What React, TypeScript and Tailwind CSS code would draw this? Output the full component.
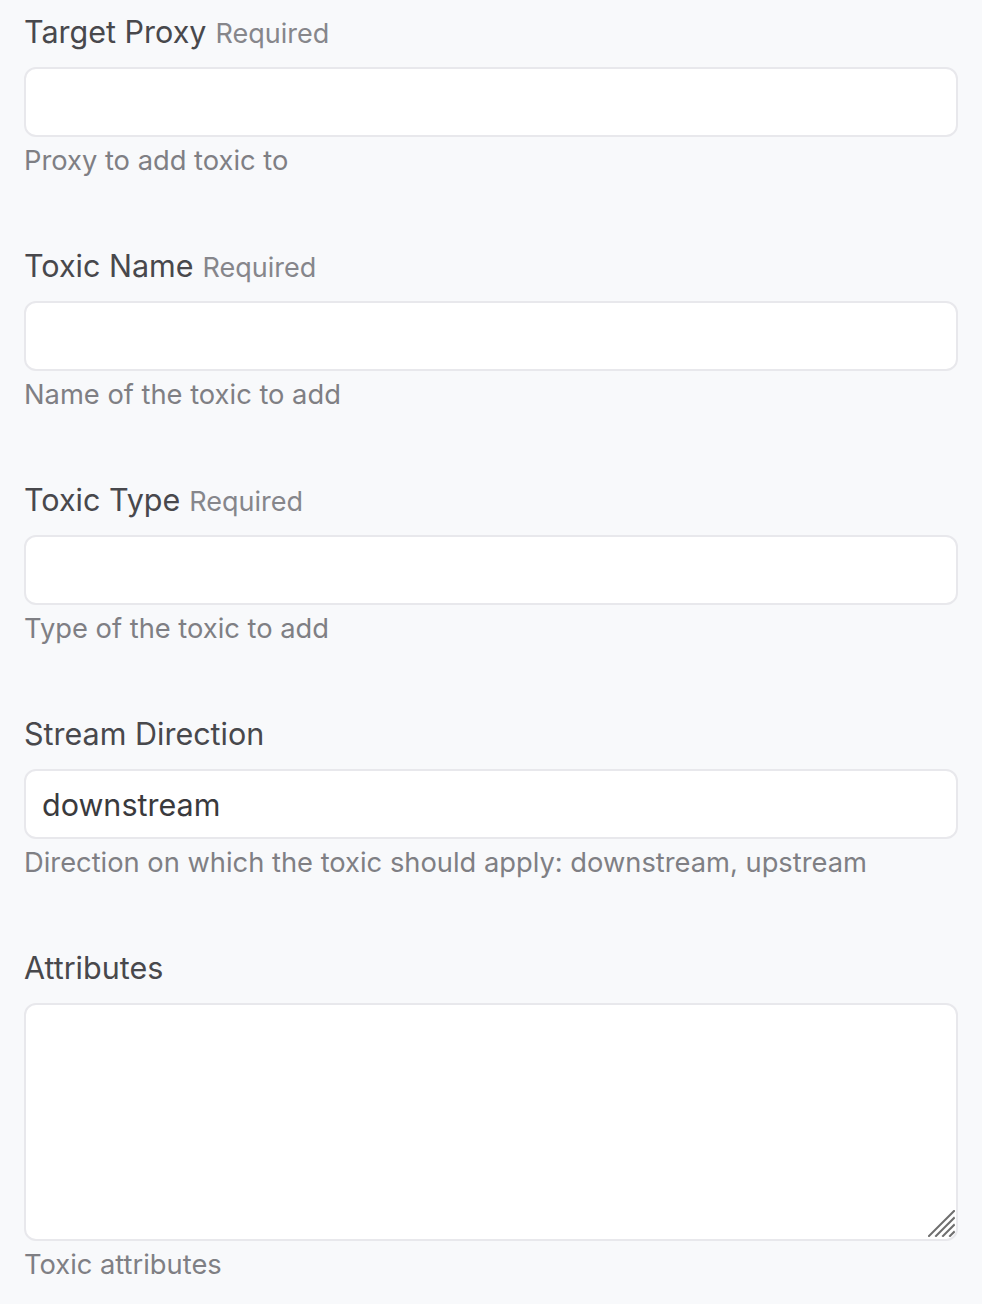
import React from "react"

interface FieldProps {
  label: string
  required?: boolean
  help: string
  value?: string
  multiline?: boolean
}

const Field: React.FC<FieldProps> = ({ label, required, help, value, multiline }) => {
  return (
    <div className="mb-[63px] last:mb-0">
      <label className="flex items-baseline gap-[9px] h-[44px] leading-[44px] mb-[13px] overflow-visible">
        <span className="text-[30.5px] leading-[44px] text-[#48484c]">{label}</span>
        {required && <span className="text-[27px] leading-[44px] text-[#86868b]">Required</span>}
      </label>
      {multiline ? (
        <div className="relative">
          <textarea
            defaultValue={value}
            className="block w-full h-[238px] bg-white border-2 border-[#e8e8ec] rounded-[12px] px-[17px] py-[12px] text-[30px] text-[#333336] outline-none resize-none"
          />
          <svg
            className="absolute right-[3px] bottom-[4px] pointer-events-none"
            width="27"
            height="27"
            viewBox="0 0 27 27"
          >
            <g stroke="#6e6e6e" strokeWidth="2" strokeLinecap="square">
              <line x1="1" y1="26" x2="26" y2="1" />
              <line x1="8" y1="26" x2="26" y2="8" />
              <line x1="15" y1="26" x2="26" y2="15" />
              <line x1="22" y1="26" x2="26" y2="22" />
            </g>
          </svg>
        </div>
      ) : (
        <input
          type="text"
          defaultValue={value}
          className="block w-full h-[70px] bg-white border-2 border-[#e8e8ec] rounded-[12px] px-[16px] text-[30.5px] text-[#3a3a3d] outline-none"
        />
      )}
      <p className="mt-[4px] text-[27.3px] leading-[40px] text-[#7f7f84]">{help}</p>
    </div>
  )
}

export default function App() {
  return (
    <div
      className="min-h-[1304px] w-full bg-[#f8f9fb] px-[24px] pt-[10px]"
      style={{ fontFamily: "Inter, 'Noto Sans', sans-serif" }}
    >
      <Field label="Target Proxy" required help="Proxy to add toxic to" />
      <Field label="Toxic Name" required help="Name of the toxic to add" />
      <Field label="Toxic Type" required help="Type of the toxic to add" />
      <Field
        label="Stream Direction"
        value="downstream"
        help="Direction on which the toxic should apply: downstream, upstream"
      />
      <Field label="Attributes" multiline help="Toxic attributes" />
    </div>
  )
}
